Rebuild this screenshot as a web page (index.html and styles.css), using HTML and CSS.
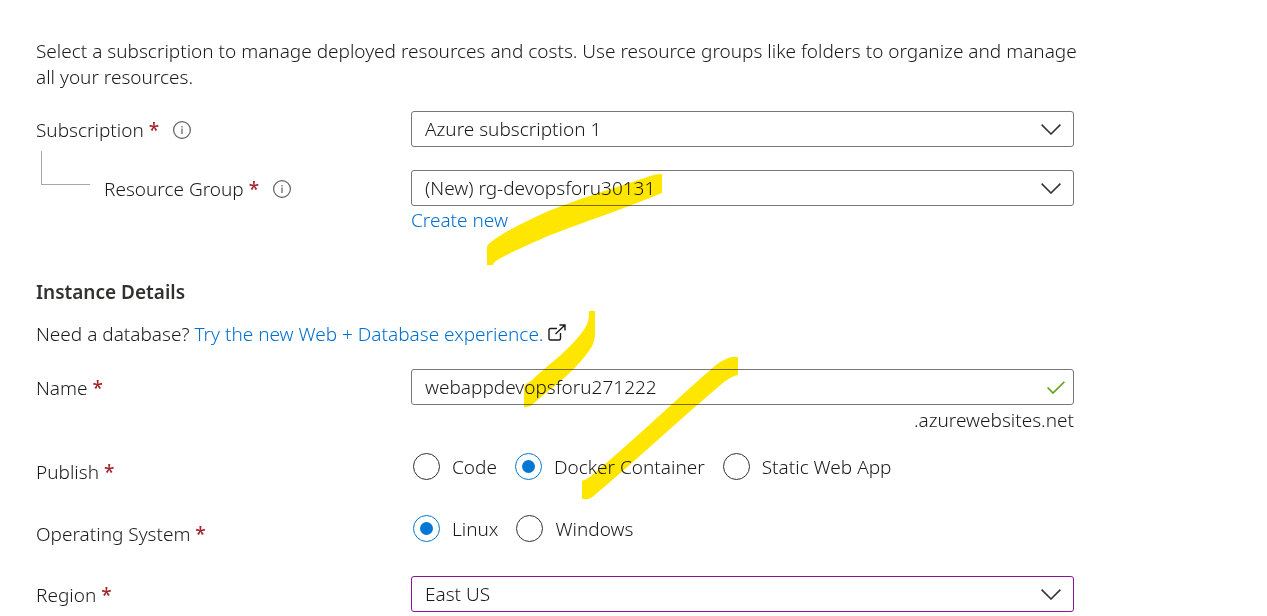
FILE: index.html
```html
<!DOCTYPE html>
<html lang="en">
<head>
<meta charset="utf-8">
<title>Create Web App</title>
<link rel="stylesheet" href="styles.css">
</head>
<body>
<main class="page">
  <form class="form">
    <p class="intro">Select a subscription to manage deployed resources and costs. Use resource groups like folders to organize and manage all your resources.</p>

    <div class="row row-subscription">
      <div class="label-cell">
        <label for="subscription">Subscription <span class="required">*</span></label>
        <svg class="info" viewBox="0 0 18 18" aria-hidden="true"><circle cx="9" cy="9" r="8.4"/><path d="M9 7.5v5.5M9 5v1.4"/></svg>
      </div>
      <div class="control">
        <select class="box" id="subscription"><option>Azure subscription 1</option></select>
        <svg class="chevron" viewBox="0 0 20 11" aria-hidden="true"><path d="M.6.6 10 10 19.4.6"/></svg>
      </div>
    </div>

    <div class="row row-group">
      <div class="label-cell label-nested">
        <span class="elbow"></span>
        <label for="group">Resource Group <span class="required">*</span></label>
        <svg class="info" viewBox="0 0 18 18" aria-hidden="true"><circle cx="9" cy="9" r="8.4"/><path d="M9 7.5v5.5M9 5v1.4"/></svg>
      </div>
      <div>
        <div class="control">
          <select class="box" id="group"><option>(New) rg-devopsforu30131</option></select>
          <svg class="chevron" viewBox="0 0 20 11" aria-hidden="true"><path d="M.6.6 10 10 19.4.6"/></svg>
        </div>
        <a class="link create" href="#">Create new</a>
      </div>
    </div>

    <h2 class="heading">Instance Details</h2>
    <p class="database">Need a database? <a class="link" href="#">Try the new Web + Database experience.</a>
      <svg class="external" viewBox="0 0 18 17" aria-hidden="true"><path d="M9 4.500H2.500Q1 4.500 1 6v8.500Q1 16 2.500 16H11q1.500 0 1.500-1.500V9M7.500 10 17 1M11.500 1H17v5.500"/></svg>
    </p>

    <div class="row row-name">
      <div class="label-cell"><label for="name">Name <span class="required">*</span></label></div>
      <div>
        <div class="control">
          <input class="box" id="name" type="text" value="webappdevopsforu271222">
          <svg class="check" viewBox="0 0 18 13" aria-hidden="true"><path d="M.6 6.500 6 12 17.400.8"/></svg>
        </div>
        <div class="suffix">.azurewebsites.net</div>
      </div>
    </div>

    <div class="row row-publish" role="radiogroup" aria-labelledby="publish-label">
      <div class="label-cell" id="publish-label"><span>Publish <span class="required">*</span></span></div>
      <div class="options">
        <label class="option"><input class="radio" type="radio" name="publish">Code</label>
        <label class="option"><input class="radio" type="radio" name="publish" checked>Docker Container</label>
        <label class="option"><input class="radio" type="radio" name="publish">Static Web App</label>
      </div>
    </div>

    <div class="row row-os" role="radiogroup" aria-labelledby="os-label">
      <div class="label-cell" id="os-label"><span>Operating System <span class="required">*</span></span></div>
      <div class="options">
        <label class="option"><input class="radio" type="radio" name="os" checked>Linux</label>
        <label class="option"><input class="radio" type="radio" name="os">Windows</label>
      </div>
    </div>

    <div class="row">
      <div class="label-cell"><label for="region">Region <span class="required">*</span></label></div>
      <div class="control">
        <select class="box box-changed" id="region"><option>East US</option></select>
        <svg class="chevron" viewBox="0 0 20 11" aria-hidden="true"><path d="M.6.6 10 10 19.4.6"/></svg>
      </div>
    </div>
  </form>

  <!-- Highlighter marks -->
  <svg class="marker" width="760" height="510" viewBox="0 0 760 510" aria-hidden="true">
    <path d="M487 246C496 236 520 224 544 213C582 197 622 186 650 176Q655 174 662 174V193C624 209 586 221 548 236C525 246 503 256 496 261Q493 263 493 265H487Z"/>
    <path d="M589 311H595V334Q595 343 589 351C573 374 548 390 533 404Q531 407 524 407V389Q524 384 531 381C546 366 565 354 580 335C588 325 589 321 589 311Z"/>
    <path d="M582 481Q586 480 591 476C632 442 673 402 716 365Q727 357 733 357H738V375Q732 376 724 382C681 418 640 457 596 494Q591 499 587 499H582Z"/>
  </svg>
</main>
</body>
</html>
```
FILE: styles.css
```css
* {
  box-sizing: border-box;
}

body {
  margin: 0;
  background: #fff;
  color: #1b1a19;
  font-family: "Segoe UI", "Noto Sans", "Open Sans", sans-serif;
  font-size: 19px;
  font-weight: 350;
  line-height: 26px;
}

.page {
  position: relative;
  padding: 38px 193px 4px 36px;
}

.intro {
  margin: 0 -12px 21px 0;
}

.row {
  display: grid;
  grid-template-columns: 375px minmax(0, 1fr);
}

.row-subscription {
  margin-bottom: 23px;
}

.row-group {
  margin-bottom: 46px;
}

.row-name {
  margin-bottom: 20px;
}

.row-publish {
  margin-bottom: 30px;
}

.row-os {
  margin-bottom: 29px;
}

.label-cell {
  display: flex;
  align-items: center;
  align-self: start;
  gap: 14px;
  padding-top: 6px;
}

.label-nested {
  position: relative;
  padding-left: 68px;
}

.elbow {
  position: absolute;
  left: 5px;
  top: -19px;
  width: 49px;
  height: 34px;
  border: solid #a8a6a4;
  border-width: 0 0 1px 1px;
}

.required {
  color: #a4262c;
  font-weight: 500;
}

.info {
  width: 18px;
  height: 18px;
  fill: none;
  stroke: #605e5c;
  stroke-width: 1.2;
}

.control {
  position: relative;
}

.box {
  display: block;
  width: 100%;
  height: 36px;
  margin: 0;
  padding: 0 48px 0 13px;
  border: 1px solid #7a7876;
  border-radius: 3px;
  background: #fff;
  color: inherit;
  font: inherit;
  appearance: none;
  outline: 0;
}

.box-changed {
  border-color: #881798;
}

.chevron,
.check {
  position: absolute;
  fill: none;
  pointer-events: none;
}

.chevron {
  right: 13px;
  top: 13px;
  width: 20px;
  height: 11px;
  stroke: #323130;
  stroke-width: 1.5;
}

.check {
  right: 9px;
  top: 12px;
  width: 18px;
  height: 13px;
  stroke: #57a300;
  stroke-width: 1.6;
}

.link {
  color: #006fd0;
  text-decoration: none;
}

.create {
  display: block;
  width: fit-content;
  margin-top: 1px;
}

.heading {
  margin: 0 0 16px;
  color: #323130;
  font-size: 19px;
  font-weight: 600;
  line-height: 26px;
}

.database {
  margin: 0 0 22px;
}

.external {
  width: 18px;
  height: 17px;
  fill: none;
  stroke: #1b1a19;
  stroke-width: 1.4;
}

.suffix {
  margin-top: 2px;
  text-align: right;
}

.options {
  display: flex;
  flex-wrap: wrap;
  align-self: start;
  gap: 18px;
  padding-left: 2px;
}

.option {
  display: flex;
  align-items: center;
  gap: 12px;
}

.radio {
  display: grid;
  place-items: center;
  width: 27px;
  height: 27px;
  margin: 0;
  border: 1px solid #323130;
  border-radius: 50%;
  background: #fff;
  appearance: none;
}

.radio:checked {
  border-color: #0078d4;
}

.radio:checked::before {
  content: "";
  width: 13px;
  height: 13px;
  border-radius: 50%;
  background: #0078d4;
}

.marker {
  position: absolute;
  left: 0;
  top: 0;
  fill: #ffe600;
  mix-blend-mode: multiply;
  pointer-events: none;
}
```
